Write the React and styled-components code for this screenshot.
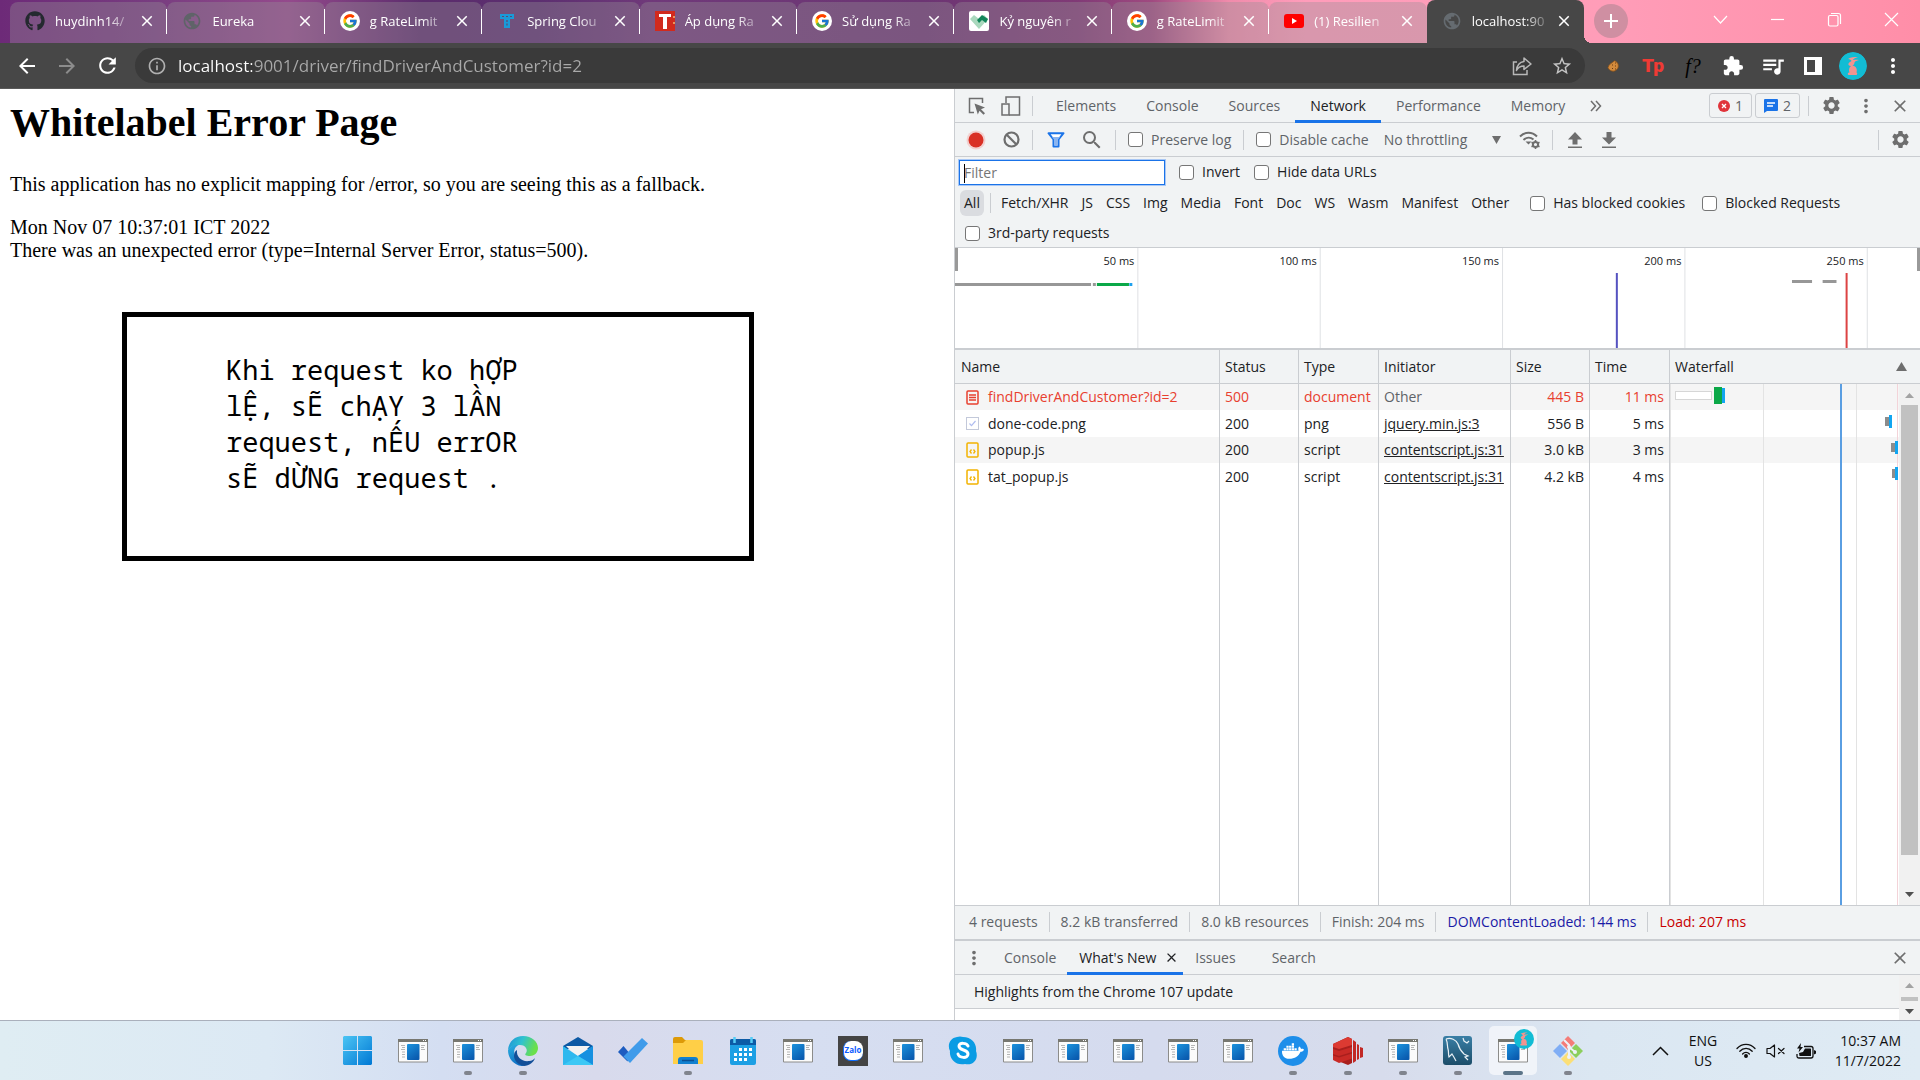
import React from "react";
import styled, { createGlobalStyle } from "styled-components";
import {
  MdArrowBack, MdArrowForward, MdRefresh, MdInfoOutline, MdStarBorder, MdExtension, MdQueueMusic,
  MdMoreVert, MdSettings, MdClose, MdSearch, MdPublic, MdAdd,
} from "react-icons/md";
import { FaGithub, FaDocker } from "react-icons/fa";
import { FcGoogle } from "react-icons/fc";

const UI = '"Open Sans", "Noto Sans", sans-serif';
const LINE = "#cacdd1";
const PANEL = "#f1f3f4";

const Global = createGlobalStyle`
  *, *::before, *::after { box-sizing: border-box; }
  html, body { margin: 0; background: #fff; }
  body { font: 14px/20px ${UI}; color: #202124; overflow: hidden; }
  button { font: inherit; color: inherit; border: 0; background: none; padding: 0; margin: 0; }
  a { color: inherit; }
  svg { display: block; flex: none; }
`;

const Screen = styled.div`
  display: flex;
  flex-direction: column;
  height: 100vh;
`;

/* ---------- tab strip ---------- */

const TabStrip = styled.div`
  display: flex;
  height: 43px;
  padding-left: 10px;
  background: linear-gradient(90deg, #6d2a78 0, #783d80 8%, #944a8c 15%, #5b2c6c 22%, #5c2f70 28%, #70397a 34%,
    #6c3573 48%, #803a76 56%, #a04a80 60%, #f08bab 64%, #ff9cba 68%, #ff9db8 84%, #ff8ea8 100%);
`;
const Tabs = styled.div`
  display: flex;
  flex: 0 1 1574px;
  min-width: 0;
`;
const Tab = styled.div`
  position: relative;
  display: flex;
  align-items: center;
  flex: 1 1 0;
  min-width: 0;
  height: ${(p) => (p.$active ? 43 : 41)}px;
  margin-top: ${(p) => (p.$active ? 0 : 2)}px;
  padding: 0 0 ${(p) => (p.$active ? 1 : 3)}px 15px;
  border-radius: 8px 8px 0 0;
  background: ${(p) => (p.$active ? "#474747" : "rgba(150, 145, 150, 0.36)")};
  &::after {
    content: "";
    display: ${(p) => (p.$active ? "block" : "none")};
    position: absolute;
    left: 100%;
    bottom: 0;
    width: 8px;
    height: 8px;
    background: radial-gradient(circle at 100% 0, transparent 8px, #474747 8px);
  }
`;
const TabButton = styled.button`
  display: flex;
  align-items: center;
  gap: 10px;
  flex: 1;
  min-width: 0;
  color: #fff;
  text-align: left;
`;
const TabTitle = styled.span`
  flex: 1;
  font-size: 13px;
  white-space: nowrap;
  mask-image: linear-gradient(90deg, #000 68%, rgba(0, 0, 0, 0.2) 100%);
`;
const TabClose = styled.button`
  display: flex;
  margin: 0 10px 0 8px;
  color: #fff;
`;
const TabDivider = styled.span`
  width: 1px;
  height: 25px;
  background: ${(p) => (p.$hidden ? "transparent" : "#fff")};
`;
const NewTab = styled.button`
  display: grid;
  place-items: center;
  width: 34px;
  height: 34px;
  margin: 4px 0 0 10px;
  border-radius: 50%;
  color: #fff;
  background: rgba(160, 130, 140, 0.5);
`;
const WindowButtons = styled.div`
  display: flex;
  margin-left: auto;
`;
const WindowButton = styled.button`
  display: grid;
  place-items: center;
  width: 57px;
  height: 38px;
`;

/* ---------- address bar ---------- */

const AddressRow = styled.div`
  display: flex;
  align-items: center;
  height: 46px;
  padding: 0 7px;
  background: #474747;
  border-bottom: 1px solid #5a5a5a;
`;
const NavButton = styled.button`
  display: grid;
  place-items: center;
  width: 40px;
  height: 36px;
  color: ${(p) => (p.$dim ? "#8c8c8c" : "#fff")};
`;
const Omnibox = styled.div`
  display: flex;
  align-items: center;
  flex: 1;
  height: 35px;
  margin: 0 8px;
  padding: 0 3px 0 12px;
  border-radius: 18px;
  background: #3a3a3a;
  color: #b0b0b0;
`;
const UrlInput = styled.input`
  flex: 1;
  height: 30px;
  margin-left: 11px;
  padding: 0;
  border: 0;
  outline: 0;
  font: 17px ${UI};
  color: transparent;
  background: linear-gradient(90deg, #fff 74px, #a9a9a9 74px);
  background-clip: text;
`;
const Avatar = styled.span`
  display: block;
  width: 28px;
  height: 28px;
  border-radius: 50%;
  overflow: hidden;
`;

/* ---------- web page ---------- */

const Workspace = styled.div`
  display: grid;
  grid-template-columns: 954fr 966fr;
  flex: 1;
  min-height: 0;
`;
const Page = styled.main`
  padding: 11px 10px;
  overflow: hidden;
  font: 20px/23px "Liberation Serif", serif;
  color: #000;
`;
const PageTitle = styled.h1`
  margin: 0 0 27px;
  font-size: 40px;
  line-height: 46px;
`;
const Paragraph = styled.p`
  margin: 0 0 20px;
`;
const Note = styled.div`
  width: 632px;
  max-width: 90%;
  min-height: 249px;
  margin: 50px 0 0 112px;
  padding: 35px 99px;
  border: 5px solid #000;
  font: 27px/36px "Noto Sans Mono", "DejaVu Sans Mono", monospace;
`;

/* ---------- devtools ---------- */

const DevTools = styled.aside`
  display: flex;
  flex-direction: column;
  min-width: 0;
  min-height: 0;
  border-left: 1px solid ${LINE};
  background: ${PANEL};
  color: #202124;
`;
const Bar = styled.div`
  display: flex;
  align-items: center;
  flex: none;
  height: 34px;
  padding: 0 4px 0 1px;
  border-bottom: 1px solid ${LINE};
  color: #5f6368;
`;
const IconButton = styled.button`
  display: grid;
  place-items: center;
  width: ${(p) => p.$w || 36}px;
  height: 32px;
  color: #6e6e6e;
`;
const Rule = styled.span`
  flex: none;
  width: 1px;
  height: 20px;
  margin: 0 ${(p) => p.$gap || 5}px;
  background: ${LINE};
`;
const Spacer = styled.span`
  flex: 1;
`;
const PanelTab = styled.button`
  height: 34px;
  padding: 0 15px;
  border-bottom: 3px solid ${(p) => (p.$active ? "#1a73e8" : "transparent")};
  border-top: 3px solid transparent;
  color: ${(p) => (p.$active ? "#202124" : "inherit")};
  white-space: nowrap;
`;
const Badge = styled.button`
  display: flex;
  align-items: center;
  gap: 5px;
  height: 25px;
  margin-right: 3px;
  padding: 0 8px;
  border: 1px solid ${LINE};
  border-radius: 3px;
`;
const CheckLabel = styled.label`
  display: flex;
  align-items: center;
  gap: 8px;
  white-space: nowrap;
`;
const CheckBox = styled.input.attrs({ type: "checkbox" })`
  appearance: none;
  flex: none;
  width: 15px;
  height: 15px;
  margin: 0;
  border: 1px solid #767676;
  border-radius: 3px;
  background: #fff;
`;
const CheckGroup = styled.span`
  display: flex;
  padding: 0 ${(p) => p.$pad || 7}px;
`;
const ThrottleBox = styled.span`
  display: flex;
  align-items: center;
  margin-right: 12px;
  svg { margin-left: -14px; pointer-events: none; }
`;
const ThrottleSelect = styled.select`
  appearance: none;
  width: 122px;
  height: 28px;
  margin-left: 8px;
  padding: 0;
  border: 0;
  font: inherit;
  color: inherit;
  background: none;
`;
const FilterBar = styled.div`
  flex: none;
  height: 91px;
  border-bottom: 1px solid ${LINE};
`;
const FilterRow = styled.div`
  display: flex;
  align-items: center;
  gap: ${(p) => p.$gap || 0}px;
  height: ${(p) => p.$h || 30}px;
  padding-left: ${(p) => p.$left}px;
`;
const FilterInput = styled.input`
  width: 206px;
  height: 25px;
  padding: 0 4px;
  border: 1px solid #1a73e8;
  outline: 1px solid #a8c7f5;
  font: inherit;
  background: linear-gradient(#000, #000) no-repeat 4px 3px / 1px 19px #fff;
  &::placeholder { color: #757575; opacity: 1; }
`;
const TypeButton = styled.button`
  height: 26px;
  padding: 0 4px;
  border-radius: 6px;
  background: ${(p) => (p.$active ? "#dadce0" : "none")};
  white-space: nowrap;
`;
const Overview = styled.div`
  flex: none;
  height: 102px;
  border-bottom: 2px solid ${LINE};
  background: #fff;
  svg text { font: 11px ${UI}; fill: #202124; }
`;

const TableArea = styled.div`
  position: relative;
  flex: 1;
  min-height: 0;
  background: #fff;
`;
const RequestTable = styled.table`
  width: 100%;
  height: 100%;
  table-layout: fixed;
  border-collapse: separate;
  border-spacing: 0;
  th, td {
    padding: 0 5px;
    border-right: 1px solid ${LINE};
    font-weight: 400;
    text-align: left;
    white-space: nowrap;
    overflow: hidden;
  }
  th:first-child, td:first-child { padding-left: 6px; }
  th:last-child, td:last-child { border-right: 0; }
  th { height: 34px; background: ${PANEL}; border-bottom: 1px solid ${LINE}; }
`;
const Col = styled.col`
  width: ${(p) => (p.$w ? p.$w + "px" : "auto")};
`;
const Row = styled.tr`
  height: 26px;
  color: ${(p) => (p.$error ? "#e8402f" : "#202124")};
  &:nth-child(odd) td { background: #f5f5f5; }
  &:nth-child(even) { height: 27px; }
  td:nth-child(n + 5) { text-align: right; padding-right: 5px; }
`;
const FillRow = styled.tr`
  height: auto;
`;
const NameCell = styled.span`
  display: flex;
  align-items: center;
  gap: 9px;
  padding-left: 5px;
`;
const Muted = styled.span`
  color: #5f6368;
`;
const WaterfallHead = styled.span`
  display: flex;
  align-items: center;
  justify-content: space-between;
  padding-right: 8px;
`;
const Waterfall = styled.svg`
  position: absolute;
  right: 22px;
  top: 34px;
  width: 228px;
  height: calc(100% - 34px);
`;
const ScrollBar = styled.div`
  position: absolute;
  right: 0;
  top: 34px;
  bottom: 0;
  display: flex;
  flex-direction: column;
  align-items: center;
  justify-content: space-between;
  width: 21px;
  padding: 9px 0 8px;
  background: #f1f1f1;
`;
const Thumb = styled.span`
  flex: ${(p) => p.$grow};
  width: 17px;
  margin: ${(p) => p.$top}px 0 0;
  background: #c1c1c1;
`;
const Track = styled.span`
  flex: ${(p) => p.$grow};
`;
const StatusBar = styled.div`
  display: flex;
  align-items: center;
  flex: none;
  height: 36px;
  padding: 0 0 2px 14px;
  border-top: 1px solid ${LINE};
  border-bottom: 2px solid ${LINE};
  color: #5f6368;
  white-space: nowrap;
`;
const Stat = styled.span`
  color: ${(p) => p.$color || "inherit"};
`;
const DrawerTab = styled(PanelTab)`
  display: flex;
  align-items: center;
  gap: 8px;
  padding: 0 ${(p) => p.$right ?? 12}px 0 12px;
`;
const DrawerBody = styled.div`
  display: flex;
  flex: none;
  height: 45px;
  background: #fff;
`;
const DrawerContent = styled.div`
  flex: 1;
`;
const Highlights = styled.div`
  height: 34px;
  padding-left: 19px;
  border-bottom: 1px solid ${LINE};
  background: ${PANEL};
  line-height: 34px;
`;
const DrawerScroll = styled.div`
  display: flex;
  flex-direction: column;
  align-items: center;
  justify-content: space-between;
  width: 21px;
  padding: 8px 0 6px;
  background: #f1f1f1;
`;

/* ---------- taskbar ---------- */

const Taskbar = styled.footer`
  display: flex;
  align-items: center;
  flex: none;
  height: 60px;
  padding-right: 19px;
  border-top: 1px solid #aab0bc;
  background: linear-gradient(90deg, #dfedf3 0, #dce9f4 14%, #d4def2 23%, #d8daec 31%, #d6def1 42%, #d5dbee 60%, #d7dcec 72%,
    #dbe7f2 83%, #dfebf4 100%);
`;
const TaskbarLead = styled.span`
  width: 280px;
  flex: none;
`;
const AppRow = styled.div`
  display: flex;
  flex: 1;
  justify-content: center;
  gap: 7px;
`;
const AppButton = styled.button`
  position: relative;
  display: grid;
  place-items: center;
  width: 48px;
  height: 49px;
  border-radius: 5px;
  background: ${(p) => (p.$active ? "rgba(255, 255, 255, 0.6)" : "none")};
  &::after {
    content: "";
    position: absolute;
    bottom: 0;
    left: calc(50% - ${(p) => (p.$active ? 10 : 4)}px);
    display: ${(p) => (p.$open ? "block" : "none")};
    width: ${(p) => (p.$active ? 20 : 8)}px;
    height: 4px;
    border-radius: 2px;
    background: ${(p) => (p.$active ? "#5b7488" : "#80848d")};
  }
`;
const ProfileBadge = styled.span`
  position: absolute;
  top: 3px;
  right: 3px;
`;
const ZaloTile = styled.span`
  display: grid;
  place-items: center;
  width: 30px;
  height: 30px;
  background: #444;
`;
const ZaloMark = styled.span`
  width: 20px;
  height: 20px;
  border-radius: 8px;
  background: #fff;
  border-left: 1px solid #0b6cff;
  border-bottom: 1px solid #0b6cff;
  color: #0b5cff;
  font: 700 8px/18px ${UI};
  text-align: center;
`;
const Tray = styled.div`
  display: flex;
  align-items: center;
  color: #111;
`;
const TrayText = styled.button`
  width: ${(p) => p.$w}px;
  text-align: ${(p) => p.$align || "center"};
  line-height: 20px;
`;
const TrayButton = styled.button`
  display: grid;
  place-items: center;
  width: 30px;
  height: 30px;
`;

/* ---------- drawings ---------- */

const GoogleIcon = () => (
  <svg width="20" height="20" viewBox="0 0 20 20">
    <circle cx="10" cy="10" r="10" fill="#fff" />
    <FcGoogle x="2" y="2" size="16" />
  </svg>
);
const SpringTIcon = () => (
  <svg width="20" height="20" viewBox="0 0 20 20">
    <path d="M3 3h14v5H3zM7 8h6v9H7z" fill="#1a9ad8" />
    <path d="M5 5.500h2m2 0h2m2 0h2M10 9v2m0 1.500v2" stroke="#5a4a72" strokeWidth="1.200" />
  </svg>
);
const RedTIcon = () => (
  <svg width="20" height="20" viewBox="0 0 20 20">
    <path d="M0 0h20v20H0z" fill="#d12a1d" />
    <path d="M4 3h12v3h-4v12H8V6H4z" fill="#fff" />
    <path d="M19 5v2m0 4v2" stroke="#ff9" strokeWidth="1" />
  </svg>
);
const HandsIcon = () => (
  <svg width="20" height="20" viewBox="0 0 20 20">
    <rect width="20" height="20" rx="2" fill="#fff" />
    <path d="M1 8l4-4 5 4 5-4 4 4-9 10z" fill="#a9d8bd" />
    <path d="M8 9l5-5 6 4-2 4-4-3-3 3z" fill="#12855a" />
  </svg>
);
const YoutubeIcon = () => (
  <svg width="20" height="20" viewBox="0 0 20 20">
    <rect y="3" width="20" height="14" rx="3" fill="#f00" />
    <path d="M8 7l5 3-5 3z" fill="#fff" />
  </svg>
);
const ShareIcon = () => (
  <svg width="20" height="20" viewBox="0 0 20 20" fill="none" stroke="#b8b8b8" strokeWidth="1.500">
    <path d="M5 6H1.500v12.500H15V14" />
    <path d="M12 2l7 6-7 5.500V10c-4 0-6 1.500-7.500 4.500C5 9 8 6 12 5.500z" strokeLinejoin="round" />
  </svg>
);
const CookieIcon = () => (
  <svg width="12" height="12" viewBox="0 0 12 12">
    <path d="M7.500.8A5.300 5.300 0 1 1 1 7.500C2 4 5 3 7.500.8z" fill="#d38a3c" stroke="#8a5218" strokeWidth=".8" />
    <path d="M5 5h1M8 6h1M5 8.500h1M8 9h1M8 3h1" stroke="#6a3b10" strokeWidth="1.200" />
  </svg>
);
const TpGlyph = styled.span`
  font: 900 19px/22px "Roboto", sans-serif;
  color: #f03a34;
`;
const FnGlyph = styled.span`
  font: italic 20px/22px "Liberation Serif", serif;
  color: #000;
`;
const SidePanelIcon = () => (
  <svg width="18" height="18" viewBox="0 0 18 18">
    <path d="M0 0h18v18H0zM3 3v12h8V3z" fill="#fff" fillRule="evenodd" />
  </svg>
);
const Rabbit = ({ size }) => (
  <svg width={size} height={size} viewBox="0 0 28 28">
    <circle cx="14" cy="14" r="14" fill="#12bcd4" />
    <path d="M9 7c3-2 6-2 10-2-3 1-5 2-5 3 2-.5 4-.5 6 0-2 .5-4 1-4.500 2.500 0 1.500-1 2.500-2 3 4 1 5 4 4 7 1 .5 1 1.500 0 2.500h-8c-1.500-1-.5-2.500 1-2.500-1-2.500-.5-5 1.500-6.500-2 0-3-1-2.500-2.500 1-1.500 2-2 3-2.500C12 8 11 7 9 7z" fill="#f3938f" />
  </svg>
);

const InspectIcon = () => (
  <svg width="18" height="18" viewBox="0 0 18 18">
    <path d="M6 15.500H1.500v-14h13V6" fill="none" stroke="#6e6e6e" strokeWidth="1.500" />
    <path d="M6.500 6.500l10.500 4-4 1.800 4 4-1.500 1.500-4-4-1.700 3.700z" fill="#6e6e6e" />
  </svg>
);
const DeviceIcon = () => (
  <svg width="20" height="20" viewBox="0 0 20 20" fill="none" stroke="#6e6e6e" strokeWidth="1.500">
    <path d="M5 7V1h13.500v18H8" />
    <path d="M1 8h7v11H1z" />
  </svg>
);
const RecordIcon = () => (
  <svg width="20" height="20" viewBox="0 0 20 20">
    <circle cx="10" cy="10" r="9.500" fill="#f4b9b5" opacity=".6" />
    <circle cx="10" cy="10" r="7.500" fill="#d93025" />
  </svg>
);
const ClearIcon = () => (
  <svg width="17" height="17" viewBox="0 0 17 17" fill="none" stroke="#6e6e6e" strokeWidth="2.200">
    <circle cx="8.500" cy="8.500" r="7" />
    <path d="M3.500 3.500l10 10" />
  </svg>
);
const FunnelIcon = () => (
  <svg width="18" height="16" viewBox="0 0 18 16">
    <path d="M1.500 1.200h15L11.500 7.500v7h-5v-7z" fill="#fff" stroke="#1a73e8" strokeWidth="2" strokeLinejoin="round" />
    <path d="M5 5h8l-2.500 3v6h-3V8z" fill="#8ab4f0" />
  </svg>
);
const WifiGearIcon = () => (
  <svg width="21" height="18" viewBox="0 0 21 18" fill="none" stroke="#6e6e6e" strokeWidth="2">
    <path d="M1 5.500c5-5 12-5 17 0M4.500 9c3-3 7-3 10-.5" />
    <path d="M6.500 10.500h6L9.500 13.500z" fill="#6e6e6e" stroke="none" />
    <circle cx="16.500" cy="13.500" r="2.600" />
    <path d="M16.500 9v2m0 5v2m-4-6.700l1.700 1m4.600 2.500l1.700 1m-8 0l1.700-1m4.600-2.500l1.700-1" strokeWidth="1.600" />
  </svg>
);
const TransferIcon = ({ down }) => (
  <svg width="14" height="16" viewBox="0 0 14 16" fill="#6e6e6e">
    <path d={down ? "M4.500 0h5v5.500H14L7 12.500 0 5.500h4.500z" : "M7 0l7 7.500H9.500V12.500h-5V7.500H0z"} />
    <path d="M0 14.500h14V16H0z" />
  </svg>
);
const ErrorIcon = () => (
  <svg width="12" height="12" viewBox="0 0 12 12">
    <circle cx="6" cy="6" r="6" fill="#e0343a" />
    <path d="M4 4l4 4m0-4l-4 4" stroke="#fff" strokeWidth="1.300" />
  </svg>
);
const MessageIcon = () => (
  <svg width="14" height="14" viewBox="0 0 14 14">
    <path d="M1 0h12q1 0 1 1v10q0 1-1 1H3l-3 2V1q0-1 1-1z" fill="#1a73e8" />
    <path d="M3 4h8M3 7h6" stroke="#fff" strokeWidth="1.300" />
  </svg>
);
const Triangle = ({ up, w = 10, h = 7, color = "#6e6e6e" }) => (
  <svg width={w} height={h} viewBox="0 0 10 7" preserveAspectRatio="none">
    <path d={up ? "M5 0l5 7H0z" : "M0 0h10L5 7z"} fill={color} />
  </svg>
);
const FileIcon = ({ kind }) => {
  if (kind === "doc")
    return (
      <svg width="13" height="15" viewBox="0 0 13 15" fill="none" stroke="#e8402f">
        <rect x="1" y="1" width="11" height="13" rx="1" strokeWidth="1.500" />
        <path d="M3 5h7M3 7.500h7M3 10h7" strokeWidth="1.300" />
      </svg>
    );
  if (kind === "img")
    return (
      <svg width="13" height="13" viewBox="0 0 13 13" fill="#fff" stroke="#c3c9da">
        <rect x=".5" y=".5" width="12" height="12" />
        <path d="M3.500 6.500l2 2.200 4-4.700" fill="none" stroke="#b0bdf0" strokeWidth="1.200" />
      </svg>
    );
  return (
    <svg width="13" height="16" viewBox="0 0 13 16" fill="none" stroke="#f2b200">
      <rect x="1" y="1" width="11" height="14" rx="1" strokeWidth="1.500" />
      <path d="M5.500 7.500L4 9.500l1.500 2M7.500 7.500L9 9.500l-1.500 2" strokeWidth="1.300" />
    </svg>
  );
};

const TimelineChart = () => {
  const marks = [50, 100, 150, 200, 250];
  const pos = (ms) => `${(ms / 264.600) * 100}%`;
  return (
    <svg width="100%" height="100">
      {marks.map((ms) => (
        <g key={ms}>
          <rect x={pos(ms)} y="0" width="1" height="100" fill="#dfe1e4" />
          <svg x={pos(ms)} overflow="visible">
            <text x="-3" y="17" textAnchor="end">{ms} ms</text>
          </svg>
        </g>
      ))}
      <rect x="0" y="35" width={pos(37.300)} height="3" fill="#979797" />
      <rect x={pos(37.800)} y="35" width="3" height="3" fill="#979797" />
      <rect x={pos(38.900)} y="35" width={pos(8.800)} height="3" fill="#0ba848" />
      <rect x={pos(47.800)} y="35" width="3" height="3" fill="#1ea0ee" />
      <rect x={pos(229.500)} y="32" width={pos(5.500)} height="3" fill="#979797" />
      <rect x={pos(237.900)} y="32" width={pos(3.800)} height="3" fill="#979797" />
      <rect x={pos(181.200)} y="25" width="2" height="75" fill="#5552c0" />
      <rect x={pos(244.200)} y="25" width="2" height="75" fill="#dc4343" />
      <rect x="0" y="0" width="3" height="23" fill="#999" />
      <svg x="100%" overflow="visible">
        <rect x="-3" y="0" width="3" height="23" fill="#999" />
      </svg>
    </svg>
  );
};

const WaterfallChart = () => (
  <Waterfall aria-hidden="true">
    <rect x="0" width="1" height="100%" fill="#e3e3e3" />
    <rect x="93" width="1" height="100%" fill="#e3e3e3" />
    <rect x="186" width="1" height="100%" fill="#e3e3e3" />
    <rect x="227" width="1" height="100%" fill="#f3d3d8" />
    <rect x="5.500" y="7.500" width="36" height="8" fill="#fff" stroke="#d6d6d6" />
    <rect x="44" y="3" width="8" height="17" fill="#0ba848" />
    <rect x="52" y="4" width="3" height="15" fill="#12a5f0" />
    <rect x="215" y="33" width="4" height="9" fill="#8c8c8c" />
    <rect x="219" y="31" width="3" height="13" fill="#12a5f0" />
    <rect x="221" y="59" width="4" height="9" fill="#8c8c8c" />
    <rect x="225" y="57" width="3" height="13" fill="#12a5f0" />
    <rect x="222" y="85" width="3" height="9" fill="#8c8c8c" />
    <rect x="225" y="83" width="3" height="13" fill="#12a5f0" />
    <rect x="170" width="2" height="100%" fill="#5a9ee2" />
  </Waterfall>
);

const WindowsLogo = () => (
  <svg width="29" height="29" viewBox="0 0 29 29">
    <defs>
      <linearGradient id="win" x2="1" y2="1">
        <stop stopColor="#4cc5f4" />
        <stop offset="1" stopColor="#0078d4" />
      </linearGradient>
    </defs>
    <path d="M1 0h13v14H0V1zM15 0h13l1 1v13H15zM0 15h14v14H1l-1-1zM15 15h14v13l-1 1H15z" fill="url(#win)" />
  </svg>
);
const AppWindow = () => (
  <svg width="30" height="24" viewBox="0 0 30 24">
    <defs>
      <linearGradient id="appBlue" x2=".6" y2="1">
        <stop stopColor="#1c93dd" />
        <stop offset="1" stopColor="#0a5cb0" />
      </linearGradient>
    </defs>
    <path d="M.5.500h29v22.500H.5z" fill="#fbfbfb" stroke="#8c8c8a" />
    <path d="M0 0h30v3H0z" fill="#777770" />
    <path d="M25 1.500h1m1 0h1" stroke="#fff" />
    <rect x="9" y="5" width="12.500" height="16" rx="1" fill="url(#appBlue)" />
    <path d="M3 6.500h4M4 8.500h3M3 10.500h4M4 13h3M4 15.500h3M4 18h3M23 6.500h4M23 8.500h3M23 10.500h4" stroke="#b5b5b5" />
  </svg>
);
const EdgeLogo = () => (
  <svg width="30" height="30" viewBox="0 0 30 30">
    <defs>
      <linearGradient id="edgeTop" x2="1" y2=".3">
        <stop stopColor="#1d8fd8" />
        <stop offset=".5" stopColor="#2fc2cf" />
        <stop offset="1" stopColor="#6be04a" />
      </linearGradient>
      <linearGradient id="edgeSide" x2=".4" y2="1">
        <stop stopColor="#2bb0e0" />
        <stop offset="1" stopColor="#0f6fc4" />
      </linearGradient>
    </defs>
    <path d="M0 14C1 5 7 0 15 0c9 0 15 6 15 12 0 5-4 8-8 8-4 0-6-1-4-3 2-3 0-8-6-8-6 0-10 2-12 5z" fill="url(#edgeTop)" />
    <path d="M0 14c2-4 7-6 11-5-4 1-6 6-4 11 2 6 6 9 10 10C8 31 0 24 0 14z" fill="url(#edgeSide)" />
    <path d="M9 14c-1 7 5 12 12 11 3 0 5-2 6-3-1 4-6 8-11 8-6-1-10-6-10-10 0-3 1-5 3-6z" fill="#124f98" />
  </svg>
);
const MailIcon = () => (
  <svg width="30" height="28" viewBox="0 0 30 28">
    <path d="M15 0l15 9v3H0V9z" fill="#0c59a4" />
    <path d="M3 9h24L15 21z" fill="#f2f2f2" />
    <path d="M0 9l15 10L30 9v19H0z" fill="#2eb8ee" />
    <path d="M30 9v19L15 19z" fill="#1690e0" />
    <path d="M0 28l15-9 15 9z" fill="#3cc8f5" />
  </svg>
);
const TodoIcon = () => (
  <svg width="30" height="25" viewBox="0 0 30 25">
    <path d="M0 14l5.500-6 7 8.500-3 7z" fill="#1d5cc0" />
    <path d="M5.500 18.500L24 0l6 5.500L12 25z" fill="#3f9bea" />
  </svg>
);
const FolderIcon = () => (
  <svg width="30" height="27" viewBox="0 0 30 27">
    <path d="M0 2q0-2 2-2h7l3 3h16v5H0z" fill="#dd9a08" />
    <path d="M0 6h10l3-3h15q2 0 2 2v22H0z" fill="#ffcf47" />
    <path d="M5 27v-4q0-3 3-3h14q3 0 3 3v4z" fill="#1180d0" />
    <path d="M9 23.500h12" stroke="#0a4f92" strokeWidth="1.500" />
  </svg>
);
const CalendarIcon = () => (
  <svg width="26" height="28" viewBox="0 0 26 28">
    <rect y="2" width="26" height="26" rx="2" fill="#1c9fe4" />
    <path d="M0 8V4q0-2 2-2h22q2 0 2 2v4z" fill="#0c5ba6" />
    <path d="M4.500 0v6M21.500 0v6" stroke="#54cdf7" strokeWidth="2.500" />
    <path d="M9 12.500h3m2 0h3m2 0h3M4 17.500h3m2 0h3m2 0h3m2 0h3M4 22.500h3m2 0h3m2 0h3" stroke="#fff" strokeWidth="3" />
  </svg>
);
const SkypeIcon = () => (
  <svg width="30" height="30" viewBox="0 0 30 30">
    <path d="M9 1a9 9 0 0 1 6 0c9 0 14 7 13 14 3 8-3 15-11 13C8 30 1 23 2 15-1 9 2 2 9 1z" fill="#0a9ce4" />
    <path d="M20 10c-1-3-9-4-9 0 0 5 9 3 9 8 0 5-9 4-10 0" fill="none" stroke="#fff" strokeWidth="3" strokeLinecap="round" />
  </svg>
);
const DockerIcon = () => (
  <svg width="30" height="30" viewBox="0 0 30 30">
    <circle cx="15" cy="15" r="15" fill="#1d8eea" />
    <FaDocker x="4" y="4" size="22" color="#fff" />
  </svg>
);
const ServerIcon = () => (
  <svg width="30" height="28" viewBox="0 0 30 28">
    <path d="M0 7L15 0l4 2v24l-4 2L0 22z" fill="#a91f1d" />
    <path d="M0 7L15 0l4 2v6L6 12 0 10z" fill="#dc3a32" />
    <path d="M0 12l6 2 13-4v5L6 19l-6-2zM0 18.500l6 2 13-4v5L6 26l-6-3z" fill="#c92a26" />
    <path d="M20 3l3 2v19l-3 2zM24 7l2 1v14l-2 1zM27 10l3 1v9l-3 1z" fill="#c22825" />
  </svg>
);
const DolphinIcon = () => (
  <svg width="29" height="29" viewBox="0 0 29 29">
    <defs>
      <linearGradient id="sea" y2="1" x2="0">
        <stop stopColor="#3a7fa6" />
        <stop offset="1" stopColor="#1c4d69" />
      </linearGradient>
    </defs>
    <rect width="29" height="29" rx="3" fill="url(#sea)" />
    <path d="M3 3c5-2 10 1 12 5 1 4 3 7 6 10l4 2-3 1 3 3M3 3c2 4 1 7 2 10 1 3 0 5 1 8l3-3c2 3 3 5 4 7M20 2l1 3 3 2 2-2" fill="none" stroke="#e8f0f5" strokeWidth="1.200" />
  </svg>
);
const GitIcon = () => (
  <svg width="30" height="30" viewBox="0 0 30 30">
    <path d="M15 0l7 7-7 7-7-7z" fill="#f47c78" />
    <path d="M7 8l7 7-7 7-7-7z" fill="#80aef5" />
    <path d="M23 8l7 7-7 7-7-7z" fill="#8ccf5c" />
    <path d="M15 16l7 7-7 7-7-7z" fill="#fbdf78" />
    <path d="M11 4l5 5v12M16 11l6 5" stroke="#eef3f8" strokeWidth="2" fill="none" />
    <circle cx="16" cy="11" r="2" fill="#eef3f8" />
    <circle cx="22" cy="16" r="2" fill="#eef3f8" />
    <circle cx="16" cy="21" r="2" fill="#eef3f8" />
  </svg>
);
const WifiIcon = () => (
  <svg width="20" height="15" viewBox="0 0 20 15" fill="none" stroke="#111" strokeWidth="1.300" strokeLinecap="round">
    <path d="M1 5.500c5-5.500 13-5.500 18 0M3.800 8.300c3.500-3.900 9-3.900 12.400 0M6.600 11c2-2.200 4.800-2.200 6.800 0" />
    <circle cx="10" cy="13" r="1.300" fill="#111" />
  </svg>
);
const MuteIcon = () => (
  <svg width="20" height="14" viewBox="0 0 20 14" fill="none" stroke="#111" strokeWidth="1.200" strokeLinejoin="round">
    <path d="M1 4.500h3L8.500 1v12L4 9.500H1z" />
    <path d="M12.500 4.500l5.500 5m0-5l-5.500 5" strokeLinecap="round" />
  </svg>
);
const BatteryIcon = () => (
  <svg width="20" height="16" viewBox="0 0 20 16">
    <path d="M8 3.500h7q2 0 2 2V13q0 2-2 2H3q-2 0-2-2v-2" fill="none" stroke="#111" strokeWidth="1.300" />
    <path d="M9 5.500h5.500q.5 0 .5.500v6.500q0 .5-.5.500h-11L3 10l4-1zM18 7l2 1v2.500l-2 1z" fill="#111" />
    <path d="M5 0L1 5.500h2.500L2.500 9.500 7 4H4.500z" fill="#111" />
  </svg>
);
const WindowGlyph = ({ d }) => (
  <svg width="15" height="15" viewBox="0 0 15 15" fill="none" stroke="#fff" strokeWidth="1.200">
    <path d={d} />
  </svg>
);

/* ---------- data ---------- */

const tabs = [
  { title: "huydinh14/", icon: <FaGithub size={20} color="#24292f" /> },
  { title: "Eureka", icon: <MdPublic size={20} color="#5f6368" /> },
  { title: "g RateLimit", icon: <GoogleIcon /> },
  { title: "Spring Clou", icon: <SpringTIcon /> },
  { title: "Áp dụng Ra", icon: <RedTIcon /> },
  { title: "Sử dụng Ra", icon: <GoogleIcon /> },
  { title: "Kỷ nguyên r", icon: <HandsIcon /> },
  { title: "g RateLimit", icon: <GoogleIcon /> },
  { title: "(1) Resilien", icon: <YoutubeIcon /> },
  { title: "localhost:90", icon: <MdPublic size={20} color="#656b70" />, active: true },
];

const types = ["Fetch/XHR", "JS", "CSS", "Img", "Media", "Font", "Doc", "WS", "Wasm", "Manifest", "Other"];

const requests = [
  { name: "findDriverAndCustomer?id=2", kind: "doc", status: 500, type: "document", from: "Other", size: "445 B", time: "11 ms", error: true },
  { name: "done-code.png", kind: "img", status: 200, type: "png", from: "jquery.min.js:3", size: "556 B", time: "5 ms", link: true },
  { name: "popup.js", kind: "js", status: 200, type: "script", from: "contentscript.js:31", size: "3.0 kB", time: "3 ms", link: true },
  { name: "tat_popup.js", kind: "js", status: 200, type: "script", from: "contentscript.js:31", size: "4.2 kB", time: "4 ms", link: true },
];

const stats = [
  ["4 requests"],
  ["8.2 kB transferred"],
  ["8.0 kB resources"],
  ["Finish: 204 ms"],
  ["DOMContentLoaded: 144 ms", "#1a1aa6"],
  ["Load: 207 ms", "#c80000"],
];

const zalo = (
  <ZaloTile>
    <ZaloMark>Zalo</ZaloMark>
  </ZaloTile>
);

const apps = [
  ["Start", <WindowsLogo />],
  ["App", <AppWindow />],
  ["App", <AppWindow />, true],
  ["Edge", <EdgeLogo />, true],
  ["Mail", <MailIcon />],
  ["To Do", <TodoIcon />],
  ["Explorer", <FolderIcon />, true],
  ["Calendar", <CalendarIcon />],
  ["App", <AppWindow />],
  ["Zalo", zalo],
  ["App", <AppWindow />],
  ["Skype", <SkypeIcon />],
  ["App", <AppWindow />],
  ["App", <AppWindow />],
  ["App", <AppWindow />],
  ["App", <AppWindow />],
  ["App", <AppWindow />],
  ["Docker", <DockerIcon />, true],
  ["Server", <ServerIcon />, true],
  ["App", <AppWindow />, true],
  ["Workbench", <DolphinIcon />, true],
  ["Chrome", <AppWindow />, true, true],
  ["Git", <GitIcon />, true],
];

const Check = ({ children }) => (
  <CheckLabel>
    <CheckBox />
    {children}
  </CheckLabel>
);

/* ---------- sections ---------- */

const BrowserChrome = () => (
  <header>
    <TabStrip>
      <Tabs>
        {tabs.map((t, i) => (
          <Tab key={i} $active={t.active}>
            <TabButton>
              {t.icon}
              <TabTitle>{t.title}</TabTitle>
            </TabButton>
            <TabClose aria-label="Close tab"><MdClose size={18} /></TabClose>
            <TabDivider $hidden={i >= 8} />
          </Tab>
        ))}
      </Tabs>
      <NewTab aria-label="New tab"><MdAdd size={24} /></NewTab>
      <WindowButtons>
        <WindowButton aria-label="Search tabs"><WindowGlyph d="M1 4l6.500 7L14 4" /></WindowButton>
        <WindowButton aria-label="Minimize"><WindowGlyph d="M1 7.500h13" /></WindowButton>
        <WindowButton aria-label="Restore"><WindowGlyph d="M1.500 5q0-1.500 1.500-1.500h6.500q1.500 0 1.500 1.500v7.500q0 1.500-1.500 1.500H3q-1.500 0-1.500-1.500zM4 1.500h7.500q2 0 2 2V12" /></WindowButton>
        <WindowButton aria-label="Close"><WindowGlyph d="M1 1l13 13M14 1L1 14" /></WindowButton>
      </WindowButtons>
    </TabStrip>
    <AddressRow>
      <NavButton aria-label="Back"><MdArrowBack size={24} /></NavButton>
      <NavButton aria-label="Forward" $dim><MdArrowForward size={24} /></NavButton>
      <NavButton aria-label="Reload"><MdRefresh size={25} /></NavButton>
      <Omnibox>
        <MdInfoOutline size={20} />
        <UrlInput aria-label="Address" defaultValue="localhost:9001/driver/findDriverAndCustomer?id=2" />
        <NavButton aria-label="Share"><ShareIcon /></NavButton>
        <NavButton aria-label="Bookmark"><MdStarBorder size={22} color="#c4c4c4" /></NavButton>
      </Omnibox>
      <NavButton aria-label="Cookies"><CookieIcon /></NavButton>
      <NavButton><TpGlyph>Tp</TpGlyph></NavButton>
      <NavButton><FnGlyph>f?</FnGlyph></NavButton>
      <NavButton aria-label="Extensions"><MdExtension size={22} /></NavButton>
      <NavButton aria-label="Media"><MdQueueMusic size={26} /></NavButton>
      <NavButton aria-label="Side panel"><SidePanelIcon /></NavButton>
      <NavButton aria-label="Profile"><Avatar><Rabbit size={28} /></Avatar></NavButton>
      <NavButton aria-label="Menu"><MdMoreVert size={24} /></NavButton>
    </AddressRow>
  </header>
);

const ErrorPage = () => (
  <Page>
    <PageTitle>Whitelabel Error Page</PageTitle>
    <Paragraph>This application has no explicit mapping for /error, so you are seeing this as a fallback.</Paragraph>
    <div>Mon Nov 07 10:37:01 ICT 2022</div>
    <div>There was an unexpected error (type=Internal Server Error, status=500).</div>
    <Note>
      Khi request ko hỢP<br />
      lỆ, sẼ chẠY 3 lẦN<br />
      request, nẾU errOR<br />
      sẼ dỪNG request .
    </Note>
  </Page>
);

const Inspector = () => (
  <DevTools>
    <Bar>
      <IconButton $w={42} aria-label="Inspect"><InspectIcon /></IconButton>
      <IconButton $w={26} aria-label="Device toolbar"><DeviceIcon /></IconButton>
      <Rule $gap={8} />
      {["Elements", "Console", "Sources", "Network", "Performance", "Memory"].map((t) => (
        <PanelTab key={t} $active={t === "Network"}>{t}</PanelTab>
      ))}
      <IconButton $w={32} aria-label="More tabs">
        <svg width="12" height="12" viewBox="0 0 12 12" fill="none" stroke="#6e6e6e" strokeWidth="1.500">
          <path d="M1 1l4.500 5L1 11M6 1l4.500 5L6 11" />
        </svg>
      </IconButton>
      <Spacer />
      <Badge><ErrorIcon />1</Badge>
      <Badge><MessageIcon />2</Badge>
      <Rule />
      <IconButton $w={34} aria-label="Settings"><MdSettings size={21} /></IconButton>
      <IconButton aria-label="Menu"><MdMoreVert size={22} /></IconButton>
      <IconButton $w={32} aria-label="Close"><MdClose size={20} /></IconButton>
    </Bar>
    <Bar>
      <IconButton $w={40} aria-label="Record"><RecordIcon /></IconButton>
      <IconButton $w={31} aria-label="Clear"><ClearIcon /></IconButton>
      <Rule />
      <IconButton aria-label="Filter"><FunnelIcon /></IconButton>
      <IconButton aria-label="Search"><MdSearch size={24} /></IconButton>
      <Rule />
      <CheckGroup><Check>Preserve log</Check></CheckGroup>
      <Rule />
      <CheckGroup><Check>Disable cache</Check></CheckGroup>
      <ThrottleBox>
        <ThrottleSelect aria-label="Throttling" defaultValue="none">
          <option value="none">No throttling</option>
        </ThrottleSelect>
        <Triangle w={9} h={8} />
      </ThrottleBox>
      <IconButton $w={34} aria-label="Network conditions"><WifiGearIcon /></IconButton>
      <Rule />
      <IconButton $w={34} aria-label="Import"><TransferIcon /></IconButton>
      <IconButton $w={34} aria-label="Export"><TransferIcon down /></IconButton>
      <Spacer />
      <Rule />
      <IconButton $w={32} aria-label="Network settings"><MdSettings size={21} /></IconButton>
    </Bar>
    <FilterBar>
      <FilterRow $left={4} $gap={14}>
        <FilterInput placeholder="Filter" aria-label="Filter" />
        <Check>Invert</Check>
        <Check>Hide data URLs</Check>
      </FilterRow>
      <FilterRow $left={5} $gap={5} $h={32}>
        <TypeButton $active>All</TypeButton>
        <Rule $gap={1} />
        {types.map((t) => <TypeButton key={t}>{t}</TypeButton>)}
        <CheckGroup $pad={12}><Check>Has blocked cookies</Check></CheckGroup>
        <Check>Blocked Requests</Check>
      </FilterRow>
      <FilterRow $left={10} $h={28}>
        <Check>3rd-party requests</Check>
      </FilterRow>
    </FilterBar>
    <Overview><TimelineChart /></Overview>
    <TableArea>
      <RequestTable>
        <colgroup>
          <Col />
          <Col $w={79} />
          <Col $w={80} />
          <Col $w={132} />
          <Col $w={79} />
          <Col $w={80} />
          <Col $w={250} />
        </colgroup>
        <thead>
          <tr>
            <th>Name</th>
            <th>Status</th>
            <th>Type</th>
            <th>Initiator</th>
            <th>Size</th>
            <th>Time</th>
            <th>
              <WaterfallHead>Waterfall<Triangle up w={11} h={9} /></WaterfallHead>
            </th>
          </tr>
        </thead>
        <tbody>
          {requests.map((r) => (
            <Row key={r.name} $error={r.error}>
              <td><NameCell><FileIcon kind={r.kind} />{r.name}</NameCell></td>
              <td>{r.status}</td>
              <td>{r.type}</td>
              <td>{r.link ? <a href={"#" + r.from}>{r.from}</a> : <Muted>{r.from}</Muted>}</td>
              <td>{r.size}</td>
              <td>{r.time}</td>
              <td />
            </Row>
          ))}
          <FillRow>
            <td /><td /><td /><td /><td /><td /><td />
          </FillRow>
        </tbody>
      </RequestTable>
      <WaterfallChart />
      <ScrollBar>
        <Triangle up w={9} h={5} color="#a3a3a3" />
        <Thumb $grow={447} $top={7} />
        <Track $grow={37} />
        <Triangle w={9} h={5} color="#505050" />
      </ScrollBar>
    </TableArea>
    <StatusBar>
      {stats.map(([text, color], i) => (
        <React.Fragment key={text}>
          {i > 0 && <Rule $gap={11} />}
          <Stat $color={color}>{text}</Stat>
        </React.Fragment>
      ))}
    </StatusBar>
    <Bar>
      <IconButton aria-label="Drawer menu"><MdMoreVert size={22} /></IconButton>
      <DrawerTab $right={11}>Console</DrawerTab>
      <DrawerTab $active $right={4}>What's New<MdClose size={15} color="#202124" /></DrawerTab>
      <DrawerTab $right={24}>Issues</DrawerTab>
      <DrawerTab>Search</DrawerTab>
      <Spacer />
      <IconButton $w={32} aria-label="Close drawer"><MdClose size={20} /></IconButton>
    </Bar>
    <DrawerBody>
      <DrawerContent>
        <Highlights>Highlights from the Chrome 107 update</Highlights>
      </DrawerContent>
      <DrawerScroll>
        <Triangle up w={9} h={5} color="#a3a3a3" />
        <Thumb $grow="0 0 4px" $top={0} />
        <Triangle w={9} h={5} color="#505050" />
      </DrawerScroll>
    </DrawerBody>
  </DevTools>
);

const SystemTaskbar = () => (
  <Taskbar>
    <TaskbarLead />
    <AppRow>
      {apps.map(([name, icon, open, active], i) => (
        <AppButton key={i} aria-label={name} $open={open} $active={active}>
          {icon}
          {active && <ProfileBadge><Rabbit size={20} /></ProfileBadge>}
        </AppButton>
      ))}
    </AppRow>
    <Tray>
      <TrayButton aria-label="Hidden icons">
        <svg width="17" height="10" viewBox="0 0 17 10" fill="none" stroke="#111" strokeWidth="1.500">
          <path d="M1 9l7.500-7.500L16 9" />
        </svg>
      </TrayButton>
      <TrayText $w={56}>ENG<br />US</TrayText>
      <TrayButton aria-label="Wi-Fi"><WifiIcon /></TrayButton>
      <TrayButton aria-label="Muted"><MuteIcon /></TrayButton>
      <TrayButton aria-label="Battery"><BatteryIcon /></TrayButton>
      <TrayText $w={80} $align="right">10:37 AM<br />11/7/2022</TrayText>
    </Tray>
  </Taskbar>
);

export default function App() {
  return (
    <Screen>
      <Global />
      <BrowserChrome />
      <Workspace>
        <ErrorPage />
        <Inspector />
      </Workspace>
      <SystemTaskbar />
    </Screen>
  );
}
